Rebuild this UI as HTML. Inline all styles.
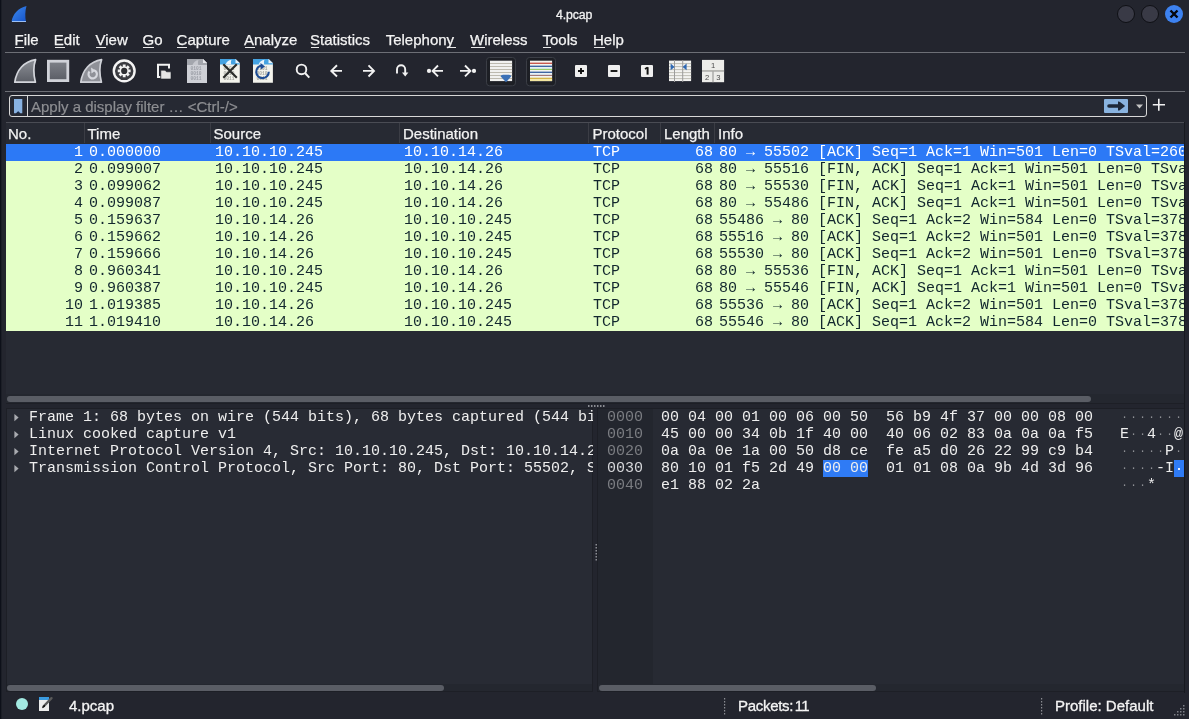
<!DOCTYPE html>
<html><head><meta charset="utf-8"><style>
*{margin:0;padding:0;box-sizing:border-box}
html,body{width:1189px;height:719px;overflow:hidden;background:#23252e;font-family:"Liberation Sans",sans-serif;color:#eff0f1}
.a{position:absolute}
.t{position:absolute;white-space:pre}
.m{font-family:"Liberation Mono",monospace}
.menu{font-size:15px;line-height:20px;color:#f4f4f4;-webkit-text-stroke:0.25px #f4f4f4}
.ul{position:absolute;height:1px;background:#e8e8e8}
.hl{position:absolute;height:1px;background:#6d6f76}
.row{position:absolute;left:6px;width:1178px;height:17px;background:#e4ffc7;color:#12272e;font-family:"Liberation Mono",monospace;font-size:15px;line-height:17px;white-space:pre;overflow:hidden}
.row.sel{background:#2c79f6;color:#ffffff}
.row span{position:absolute;top:0}
.hdr{font-size:15px;line-height:18px;color:#f2f2f2;-webkit-text-stroke:0.25px #f2f2f2}
.vs{position:absolute;top:123px;width:1px;height:20px;background:#3b3d45}
.tree{font-family:"Liberation Mono",monospace;font-size:15px;line-height:17px;color:#eeeeee}
.hex{font-family:"Liberation Mono",monospace;font-size:15px;line-height:17px;color:#eeeeee}
.off{color:#7b7d82}
.dot{color:#8e9095;font-size:11px;display:inline-block;width:9px;text-align:center;vertical-align:top}
.sb{position:absolute;font-size:15px;line-height:18px;color:#f4f4f4;-webkit-text-stroke:0.3px #f4f4f4}
</style></head><body><div style="position:absolute;left:0;top:0;width:1189px;height:719px;will-change:transform">
<div class="a" style="left:0;top:0;width:1px;height:719px;background:#0d1019"></div>
<div class="a" style="left:1px;top:0;width:1px;height:719px;background:#1b1e26"></div>
<div class="t" style="left:556px;top:6.5px;font-size:12.3px;line-height:16px;letter-spacing:-0.1px;color:#f2f2f2;-webkit-text-stroke:0.3px #f2f2f2">4.pcap</div>
<svg class="a" style="left:10px;top:5px" width="18" height="18" viewBox="0 0 18 18"><defs><linearGradient id="fg" x1="0" y1="0" x2="1" y2="1"><stop offset="0" stop-color="#3f8cf0"/><stop offset="1" stop-color="#1553c8"/></linearGradient></defs><path d="M1.5 16.5 C3 9 8 3 16.5 1 C15 6 15 12 16 16.5 Z" fill="url(#fg)"/><path d="M2 16.5 L16 16.5" stroke="#9cc0f5" stroke-width="1"/></svg>
<div class="a" style="left:1117px;top:5px;width:18px;height:18px;border-radius:50%;background:#393a46;border:1px solid #0f1015"></div>
<div class="a" style="left:1141px;top:5px;width:18px;height:18px;border-radius:50%;background:#393a46;border:1px solid #0f1015"></div>
<div class="a" style="left:1165px;top:5px;width:18px;height:18px;border-radius:50%;background:#3d82f0"></div>
<svg class="a" style="left:1165px;top:5px" width="18" height="18"><path d="M5.5 5.5 L12.5 12.5 M12.5 5.5 L5.5 12.5" stroke="#05070c" stroke-width="2.4"/></svg>
<div class="t menu" style="left:14.5px;top:30px">File</div>
<div class="ul" style="left:15.0px;top:47px;width:9.0px"></div>
<div class="t menu" style="left:53.8px;top:30px">Edit</div>
<div class="ul" style="left:55.0px;top:47px;width:9.5px"></div>
<div class="t menu" style="left:95.5px;top:30px">View</div>
<div class="ul" style="left:96.0px;top:47px;width:10.0px"></div>
<div class="t menu" style="left:142.6px;top:30px">Go</div>
<div class="ul" style="left:143.0px;top:47px;width:11.0px"></div>
<div class="t menu" style="left:176.6px;top:30px">Capture</div>
<div class="ul" style="left:177.0px;top:47px;width:10.0px"></div>
<div class="t menu" style="left:244.0px;top:30px">Analyze</div>
<div class="ul" style="left:245.0px;top:47px;width:9.5px"></div>
<div class="t menu" style="left:310.0px;top:30px">Statistics</div>
<div class="ul" style="left:310.6px;top:47px;width:8.4px"></div>
<div class="t menu" style="left:385.7px;top:30px">Telephony</div>
<div class="ul" style="left:448.9px;top:47px;width:7.1px"></div>
<div class="t menu" style="left:470.0px;top:30px">Wireless</div>
<div class="ul" style="left:470.7px;top:47px;width:14.3px"></div>
<div class="t menu" style="left:542.5px;top:30px">Tools</div>
<div class="ul" style="left:543.0px;top:47px;width:8.0px"></div>
<div class="t menu" style="left:593.0px;top:30px">Help</div>
<div class="ul" style="left:594.3px;top:47px;width:10.7px"></div>
<div class="hl" style="left:5px;top:52px;width:1180px"></div>
<div class="hl" style="left:5px;top:91px;width:1180px"></div>
<svg class="a" style="left:0;top:0" width="1189" height="92" viewBox="0 0 1189 92"><defs><linearGradient id="gfin" x1="0" y1="0" x2="0" y2="1"><stop offset="0" stop-color="#8d9097"/><stop offset="1" stop-color="#5b5e66"/></linearGradient><linearGradient id="gsq" x1="0" y1="0" x2="0" y2="1"><stop offset="0" stop-color="#7e8189"/><stop offset="1" stop-color="#5a5d65"/></linearGradient></defs><path d="M14.8 82.2 C16.5 70 24 61.5 35.6 59.6 C33.6 65 33.4 74 35.4 82.2 Z" fill="url(#gfin)" stroke="#d3d5db" stroke-width="1.7" stroke-linejoin="round"/><rect x="48.4" y="61.2" width="19.4" height="19.4" fill="url(#gsq)" stroke="#d0d2d9" stroke-width="2.8"/><path d="M80.8 82.2 C82.5 70 90 61.5 101.6 59.6 C99.6 65 99.4 74 101.4 82.2 Z" fill="#8f9198" stroke="#cfd1d7" stroke-width="1.7" stroke-linejoin="round"/><path d="M89.5 71.5 A4.2 4.2 0 1 0 94 70.2" fill="none" stroke="#d6d8de" stroke-width="2.2"/><path d="M91 67.5 L95.5 70.5 L91.5 73.5 Z" fill="#d6d8de"/><circle cx="124.2" cy="70.9" r="10.4" fill="#3a3b40" stroke="#f4f4f4" stroke-width="2.4"/><path d="M128.45 69.14 L128.69 69.51 L130.64 69.46 L130.64 72.34 L128.69 72.29 L128.45 72.66 L128.36 73.09 L129.77 74.44 L127.74 76.47 L126.39 75.06 L125.96 75.15 L125.59 75.39 L125.64 77.34 L122.76 77.34 L122.81 75.39 L122.44 75.15 L122.01 75.06 L120.66 76.47 L118.63 74.44 L120.04 73.09 L119.95 72.66 L119.71 72.29 L117.76 72.34 L117.76 69.46 L119.71 69.51 L119.95 69.14 L120.04 68.71 L118.63 67.36 L120.66 65.33 L122.01 66.74 L122.44 66.65 L122.81 66.41 L122.76 64.46 L125.64 64.46 L125.59 66.41 L125.96 66.65 L126.39 66.74 L127.74 65.33 L129.77 67.36 L128.36 68.71 Z" fill="#f2f2f2"/><circle cx="124.2" cy="70.9" r="3.1" fill="#2e2f33"/><path d="M169 68.5 V64.8 H158 V77 H160.5" fill="none" stroke="#f2f2f2" stroke-width="2"/><path d="M160.8 70.2 H165 L166.5 71.8 H171 V79 H160.8 Z" fill="#e6e6e6" stroke="#1d1f26" stroke-width="0.6"/><path d="M187 59 H203 L207 63 V83 H187 Z" fill="#ced0d6"/><path d="M187 59 H203 L207 63 V65 H187 Z" fill="#a3a6ad"/><path d="M203 59 L207 63 H203 Z" fill="#e5e6ea"/><path d="M192.5 65 C193.5 62.3 195.5 60.5 198.5 60 C197.8 61.5 197.8 63.3 198.3 65 Z" fill="#c6c8ce"/><g fill="#9b9ea6" font-family="Liberation Mono" font-size="4.6" font-weight="bold"><text x="190.5" y="70">0101</text><text x="190.5" y="75">0010</text><text x="190.5" y="80">0011</text></g><path d="M220 59 H235.5 L239.8 63.3 V82.7 H220 Z" fill="#f3f3ec"/><path d="M220 59 H235.5 L239.8 63.3 V64.5 H220 Z" fill="#45a3e2"/><path d="M235.5 59 L239.8 63.3 H235.5 Z" fill="#e8f2f8"/><path d="M225.5 64.5 C226.5 62 228.5 60.3 231.5 59.8 C230.8 61.3 230.8 63 231.3 64.5 Z" fill="#e9f4fb"/><g fill="#a5a7a0" font-family="Liberation Mono" font-size="4.6" font-weight="bold"><text x="223.5" y="70">0101</text><text x="223.5" y="75">0010</text><text x="223.5" y="80">0011</text></g><path d="M223.3 64.3 L236.8 77.8 M236.8 64.3 L223.3 77.8" stroke="#2a2c2a" stroke-width="2.1"/><path d="M253 59 H268.5 L272.9 63.3 V82.7 H253 Z" fill="#f3f3ec"/><path d="M253 59 H268.5 L272.9 63.3 V64.5 H253 Z" fill="#45a3e2"/><path d="M268.5 59 L272.9 63.3 H268.5 Z" fill="#e8f2f8"/><path d="M258.5 64.5 C259.5 62 261.5 60.3 264.5 59.8 C263.8 61.3 263.8 63 264.3 64.5 Z" fill="#e9f4fb"/><g fill="#a5a7a0" font-family="Liberation Mono" font-size="4.6" font-weight="bold"><text x="256.5" y="70">0101</text><text x="256.5" y="75">0010</text><text x="256.5" y="80">0011</text></g><path d="M262 65.5 A6.3 6.3 0 1 0 268.8 71.8" fill="none" stroke="#1d4c94" stroke-width="2.1"/><path d="M260.5 63 L265 66.5 L260.8 69.5 Z" fill="#1d4c94"/><circle cx="301.5" cy="69.4" r="4.8" fill="none" stroke="#f2f2f2" stroke-width="1.9"/><path d="M305 73 L309.3 77.6" stroke="#f2f2f2" stroke-width="2"/><path d="M342 70.9 H331 M337 65.3 L331.3 70.9 L337 76.5" fill="none" stroke="#f2f2f2" stroke-width="1.9"/><path d="M363 70.9 H374 M368.5 65.3 L374 70.9 L368.5 76.5" fill="none" stroke="#f2f2f2" stroke-width="1.9"/><path d="M397 73.6 V69.4 A4.1 4.1 0 0 1 405.2 69.4 V73" fill="none" stroke="#f2f2f2" stroke-width="1.9"/><path d="M402 72.5 H408.4 L405.2 76.6 Z" fill="#f2f2f2"/><circle cx="429" cy="70.9" r="2.1" fill="#f2f2f2"/><path d="M443 70.9 H433 M438 65.5 L432.6 70.9 L438 76.3" fill="none" stroke="#f2f2f2" stroke-width="1.9"/><circle cx="474" cy="70.9" r="2.1" fill="#f2f2f2"/><path d="M460 70.9 H470 M465 65.5 L470.4 70.9 L465 76.3" fill="none" stroke="#f2f2f2" stroke-width="1.9"/><rect x="486.5" y="57.5" width="29" height="28.3" rx="3" fill="#1d1f25" stroke="#3b3e46" stroke-width="1"/><rect x="490" y="60.7" width="22.1" height="20.4" fill="#f1f1ef"/><rect x="490" y="63.0" width="22.1" height="0.9" fill="#b7b4a8"/><rect x="490" y="66.0" width="22.1" height="0.9" fill="#b7b4a8"/><rect x="490" y="69.0" width="22.1" height="0.9" fill="#b7b4a8"/><rect x="490" y="72.0" width="22.1" height="0.9" fill="#b7b4a8"/><rect x="490" y="75.0" width="22.1" height="0.9" fill="#b7b4a8"/><rect x="490" y="78.0" width="22.1" height="0.9" fill="#b7b4a8"/><path d="M500.5 76.3 Q501 74.8 503 74.8 H509 Q511 74.8 511.3 76.3 L506 82.2 Z" fill="#3a70b6"/><rect x="526.5" y="57.5" width="29" height="28.3" rx="3" fill="#1d1f25" stroke="#3b3e46" stroke-width="1"/><rect x="530" y="60.7" width="22.1" height="20.4" fill="#f4f4f0"/><rect x="530" y="62.6" width="22.1" height="1.4" fill="#c8594f"/><rect x="530" y="65.6" width="22.1" height="1.4" fill="#3f66a3"/><rect x="530" y="68.5" width="22.1" height="1.4" fill="#8fc85a"/><rect x="530" y="71.6" width="22.1" height="1.4" fill="#3f66a3"/><rect x="530" y="74.5" width="22.1" height="1.4" fill="#9a6b6b"/><rect x="530" y="77.7" width="22.1" height="1.4" fill="#d4b447"/><rect x="530" y="67.5" width="22.1" height="1.2" fill="#d8ecf8"/><rect x="530" y="73.5" width="22.1" height="1.2" fill="#dff0fa"/><rect x="530" y="79.2" width="22.1" height="1.9" fill="#f3e6a0"/><rect x="575" y="65" width="12" height="12" rx="1" fill="#efefef"/><rect x="608" y="65" width="12" height="12" rx="1" fill="#efefef"/><rect x="641" y="65" width="12" height="12" rx="1" fill="#efefef"/><path d="M578 71 H584 M581 68 V74" stroke="#111" stroke-width="1.9"/><path d="M610.6 71 H617.4" stroke="#111" stroke-width="1.9"/><path d="M647.6 67.2 V74.6" fill="none" stroke="#111" stroke-width="2"/><path d="M645 69 L647.6 67.3" fill="none" stroke="#111" stroke-width="1.5"/><rect x="669" y="60.6" width="22.1" height="20.5" fill="#f3f3f1"/><rect x="669" y="63.2" width="22.1" height="0.9" fill="#b9b7ad"/><rect x="669" y="66.2" width="22.1" height="0.9" fill="#b9b7ad"/><rect x="669" y="69.2" width="22.1" height="0.9" fill="#b9b7ad"/><rect x="669" y="72.2" width="22.1" height="0.9" fill="#b9b7ad"/><rect x="669" y="75.2" width="22.1" height="0.9" fill="#b9b7ad"/><rect x="669" y="78.2" width="22.1" height="0.9" fill="#b9b7ad"/><rect x="674" y="60" width="1" height="22" fill="#9c9c9c"/><rect x="682.2" y="60" width="1" height="22" fill="#9c9c9c"/><path d="M670.6 63.6 L674.6 66.9 L670.6 70.2 Z" fill="#2f68b2"/><path d="M686.6 63.6 L682.6 66.9 L686.6 70.2 Z" fill="#2f68b2"/><rect x="702" y="59.9" width="22.1" height="22.3" fill="#ecece9"/><rect x="702" y="70.2" width="22.1" height="1.5" fill="#a8a8a5"/><rect x="712.3" y="71" width="1.4" height="11.2" fill="#a8a8a5"/><g fill="#4a4a4a" font-family="Liberation Sans" font-size="7.6"><text x="711" y="67.8">1</text><text x="705" y="79.6">2</text><text x="716.2" y="79.6">3</text></g></svg>
<div class="a" style="left:9px;top:95px;width:1138px;height:22px;border:1px solid #d8d8d8;border-radius:3px;background:#262933"></div>
<div class="a" style="left:27px;top:96px;width:1px;height:20px;background:#d8d8d8"></div>
<svg class="a" style="left:13.8px;top:98.8px" width="9" height="15"><path d="M0 0 H8.3 V14.2 H6.3 L4.15 12.2 L2 14.2 H0 Z" fill="#88b2e2"/><path d="M2.6 14.2 L4.15 12.6 L5.7 14.2 Z" fill="#16325a"/></svg>
<div class="t" style="left:31px;top:97px;font-size:15px;line-height:20px;color:#8d8e92;-webkit-text-stroke:0.2px #8d8e92">Apply a display filter … &lt;Ctrl-/&gt;</div>
<div class="a" style="left:1104px;top:99px;width:24px;height:14px;background:#89b3e0;border-radius:1px"></div>
<svg class="a" style="left:1104px;top:99px" width="24" height="14"><path d="M5 7 H15" stroke="#1e2838" stroke-width="3.6" stroke-linecap="round"/><path d="M14 2.6 Q15 2.2 16 3 L20.6 6.4 Q21.2 7 20.6 7.6 L16 11 Q15 11.8 14 11.4 Z" fill="#1e2838"/></svg>
<svg class="a" style="left:1135.5px;top:104px" width="8" height="6"><path d="M0 0.5 H7 L3.5 4.5 Z" fill="#c4c4c4"/></svg>
<svg class="a" style="left:1152px;top:98px" width="14" height="14"><path d="M6.8 0.8 V12.8 M0.8 6.8 H13" stroke="#f0f0f0" stroke-width="1.6"/></svg>
<div class="a" style="left:6px;top:122px;width:1178px;height:272px;background:#272a33"></div>
<div class="a" style="left:6px;top:122px;width:1178px;height:1px;background:#4a4c54"></div>
<div class="a" style="left:6px;top:123px;width:1178px;height:20px;background:#272a33"></div>
<div class="t hdr" style="left:8.0px;top:124.7px">No.</div>
<div class="t hdr" style="left:87.5px;top:124.7px">Time</div>
<div class="t hdr" style="left:213.5px;top:124.7px">Source</div>
<div class="t hdr" style="left:403.0px;top:124.7px">Destination</div>
<div class="t hdr" style="left:592.5px;top:124.7px">Protocol</div>
<div class="t hdr" style="left:664.0px;top:124.7px">Length</div>
<div class="t hdr" style="left:718.0px;top:124.7px">Info</div>
<div class="vs" style="left:84px"></div>
<div class="vs" style="left:210px"></div>
<div class="vs" style="left:399px"></div>
<div class="vs" style="left:588px"></div>
<div class="vs" style="left:660px"></div>
<div class="vs" style="left:714px"></div>
<div class="row sel" style="top:144px"><span style="right:1101px">1</span><span style="left:83px">0.000000</span><span style="left:209px">10.10.10.245</span><span style="left:398px">10.10.14.26</span><span style="left:587px">TCP</span><span style="right:471px">68</span><span style="left:713px">80 → 55502 [ACK] Seq=1 Ack=1 Win=501 Len=0 TSval=2600</span></div>
<div class="row" style="top:161px"><span style="right:1101px">2</span><span style="left:83px">0.099007</span><span style="left:209px">10.10.10.245</span><span style="left:398px">10.10.14.26</span><span style="left:587px">TCP</span><span style="right:471px">68</span><span style="left:713px">80 → 55516 [FIN, ACK] Seq=1 Ack=1 Win=501 Len=0 TSval=2600</span></div>
<div class="row" style="top:178px"><span style="right:1101px">3</span><span style="left:83px">0.099062</span><span style="left:209px">10.10.10.245</span><span style="left:398px">10.10.14.26</span><span style="left:587px">TCP</span><span style="right:471px">68</span><span style="left:713px">80 → 55530 [FIN, ACK] Seq=1 Ack=1 Win=501 Len=0 TSval=2600</span></div>
<div class="row" style="top:195px"><span style="right:1101px">4</span><span style="left:83px">0.099087</span><span style="left:209px">10.10.10.245</span><span style="left:398px">10.10.14.26</span><span style="left:587px">TCP</span><span style="right:471px">68</span><span style="left:713px">80 → 55486 [FIN, ACK] Seq=1 Ack=1 Win=501 Len=0 TSval=2600</span></div>
<div class="row" style="top:212px"><span style="right:1101px">5</span><span style="left:83px">0.159637</span><span style="left:209px">10.10.14.26</span><span style="left:398px">10.10.10.245</span><span style="left:587px">TCP</span><span style="right:471px">68</span><span style="left:713px">55486 → 80 [ACK] Seq=1 Ack=2 Win=584 Len=0 TSval=3780</span></div>
<div class="row" style="top:229px"><span style="right:1101px">6</span><span style="left:83px">0.159662</span><span style="left:209px">10.10.14.26</span><span style="left:398px">10.10.10.245</span><span style="left:587px">TCP</span><span style="right:471px">68</span><span style="left:713px">55516 → 80 [ACK] Seq=1 Ack=2 Win=501 Len=0 TSval=3780</span></div>
<div class="row" style="top:246px"><span style="right:1101px">7</span><span style="left:83px">0.159666</span><span style="left:209px">10.10.14.26</span><span style="left:398px">10.10.10.245</span><span style="left:587px">TCP</span><span style="right:471px">68</span><span style="left:713px">55530 → 80 [ACK] Seq=1 Ack=2 Win=501 Len=0 TSval=3780</span></div>
<div class="row" style="top:263px"><span style="right:1101px">8</span><span style="left:83px">0.960341</span><span style="left:209px">10.10.10.245</span><span style="left:398px">10.10.14.26</span><span style="left:587px">TCP</span><span style="right:471px">68</span><span style="left:713px">80 → 55536 [FIN, ACK] Seq=1 Ack=1 Win=501 Len=0 TSval=2600</span></div>
<div class="row" style="top:280px"><span style="right:1101px">9</span><span style="left:83px">0.960387</span><span style="left:209px">10.10.10.245</span><span style="left:398px">10.10.14.26</span><span style="left:587px">TCP</span><span style="right:471px">68</span><span style="left:713px">80 → 55546 [FIN, ACK] Seq=1 Ack=1 Win=501 Len=0 TSval=2600</span></div>
<div class="row" style="top:297px"><span style="right:1101px">10</span><span style="left:83px">1.019385</span><span style="left:209px">10.10.14.26</span><span style="left:398px">10.10.10.245</span><span style="left:587px">TCP</span><span style="right:471px">68</span><span style="left:713px">55536 → 80 [ACK] Seq=1 Ack=2 Win=501 Len=0 TSval=3780</span></div>
<div class="row" style="top:314px"><span style="right:1101px">11</span><span style="left:83px">1.019410</span><span style="left:209px">10.10.14.26</span><span style="left:398px">10.10.10.245</span><span style="left:587px">TCP</span><span style="right:471px">68</span><span style="left:713px">55546 → 80 [ACK] Seq=1 Ack=2 Win=584 Len=0 TSval=3780</span></div>
<div class="a" style="left:6px;top:394px;width:1178px;height:9px;background:#24272f"></div>
<div class="a" style="left:6px;top:403px;width:1178px;height:1px;background:#1d1f26"></div>
<div class="a" style="left:7px;top:396px;width:1084px;height:6px;border-radius:3px;background:#5a5d65"></div>
<svg class="a" style="left:587px;top:405px" width="18" height="3"><rect x="1" y="0" width="1.5" height="2" fill="#8a8c92"/><rect x="4" y="0" width="1.5" height="2" fill="#8a8c92"/><rect x="7" y="0" width="1.5" height="2" fill="#8a8c92"/><rect x="10" y="0" width="1.5" height="2" fill="#8a8c92"/><rect x="13" y="0" width="1.5" height="2" fill="#8a8c92"/><rect x="16" y="0" width="1.5" height="2" fill="#8a8c92"/></svg>
<div class="a" style="left:6px;top:408px;width:587px;height:284px;background:#1d1f26"></div>
<div class="a" style="left:7px;top:409px;width:585px;height:282px;background:#282b34"></div>
<div class="a" style="left:7px;top:684px;width:585px;height:7px;background:#24272f"></div>
<div class="a" style="left:6px;top:408px;width:587px;height:260px;overflow:hidden">
<svg class="a" style="left:7.5px;top:6px" width="6" height="9"><path d="M0.4 0 L4.6 3.6 L0.4 7.2 Z" fill="#a9abb0"/></svg>
<div class="t tree" style="left:23px;top:1px">Frame 1: 68 bytes on wire (544 bits), 68 bytes captured (544 bits)</div>
<svg class="a" style="left:7.5px;top:23px" width="6" height="9"><path d="M0.4 0 L4.6 3.6 L0.4 7.2 Z" fill="#a9abb0"/></svg>
<div class="t tree" style="left:23px;top:18px">Linux cooked capture v1</div>
<svg class="a" style="left:7.5px;top:40px" width="6" height="9"><path d="M0.4 0 L4.6 3.6 L0.4 7.2 Z" fill="#a9abb0"/></svg>
<div class="t tree" style="left:23px;top:35px">Internet Protocol Version 4, Src: 10.10.10.245, Dst: 10.10.14.26</div>
<svg class="a" style="left:7.5px;top:57px" width="6" height="9"><path d="M0.4 0 L4.6 3.6 L0.4 7.2 Z" fill="#a9abb0"/></svg>
<div class="t tree" style="left:23px;top:52px">Transmission Control Protocol, Src Port: 80, Dst Port: 55502, Seq: 1, Ack: 1, Len: 0</div>
</div>
<svg class="a" style="left:595px;top:543px" width="3" height="19"><rect x="0.5" y="1" width="1.5" height="1.5" fill="#8a8c92"/><rect x="0.5" y="4" width="1.5" height="1.5" fill="#8a8c92"/><rect x="0.5" y="7" width="1.5" height="1.5" fill="#8a8c92"/><rect x="0.5" y="10" width="1.5" height="1.5" fill="#8a8c92"/><rect x="0.5" y="13" width="1.5" height="1.5" fill="#8a8c92"/><rect x="0.5" y="16" width="1.5" height="1.5" fill="#8a8c92"/></svg>
<div class="a" style="left:597px;top:408px;width:588px;height:284px;background:#1d1f26"></div>
<div class="a" style="left:598px;top:409px;width:586px;height:282px;background:#272a33"></div>
<div class="a" style="left:598px;top:409px;width:55px;height:275px;background:#23262e"></div>
<div class="a" style="left:598px;top:684px;width:586px;height:7px;background:#24272f"></div>
<div class="a" style="left:597px;top:408px;width:587px;height:276px;overflow:hidden">
<div class="t hex" style="left:10px;top:1.3px;color:#7b7d82">0000</div>
<div class="t hex" style="left:64px;top:1.3px">00 04 00 01 00 06 00 50  56 b9 4f 37 00 00 08 00</div>
<div class="t hex" style="left:523px;top:1.3px"><span class="dot">·</span><span class="dot">·</span><span class="dot">·</span><span class="dot">·</span><span class="dot">·</span><span class="dot">·</span><span class="dot">·</span><span class="dot">·</span></div>
<div class="t hex" style="left:10px;top:18.3px;color:#7b7d82">0010</div>
<div class="t hex" style="left:64px;top:18.3px">45 00 00 34 0b 1f 40 00  40 06 02 83 0a 0a 0a f5</div>
<div class="t hex" style="left:523px;top:18.3px">E<span class="dot">·</span><span class="dot">·</span>4<span class="dot">·</span><span class="dot">·</span>@<span class="dot">·</span></div>
<div class="t hex" style="left:10px;top:35.3px;color:#7b7d82">0020</div>
<div class="t hex" style="left:64px;top:35.3px">0a 0a 0e 1a 00 50 d8 ce  fe a5 d0 26 22 99 c9 b4</div>
<div class="t hex" style="left:523px;top:35.3px"><span class="dot">·</span><span class="dot">·</span><span class="dot">·</span><span class="dot">·</span><span class="dot">·</span>P<span class="dot">·</span><span class="dot">·</span></div>
<div class="t hex" style="left:10px;top:52.3px;color:#d6d7da">0030</div>
<div class="t hex" style="left:64px;top:52.3px">80 10 01 f5 2d 49 00 00  01 01 08 0a 9b 4d 3d 96</div>
<div class="t hex" style="left:523px;top:52.3px"><span class="dot">·</span><span class="dot">·</span><span class="dot">·</span><span class="dot">·</span>-I<span class="dot">·</span><span class="dot">·</span></div>
<div class="t hex" style="left:10px;top:69.3px;color:#7b7d82">0040</div>
<div class="t hex" style="left:64px;top:69.3px">e1 88 02 2a</div>
<div class="t hex" style="left:523px;top:69.3px"><span class="dot">·</span><span class="dot">·</span><span class="dot">·</span>*</div>
</div>
<div class="a" style="left:823px;top:460px;width:45px;height:17px;background:#2f7bf5"></div>
<div class="t hex" style="left:823px;top:460.3px">00 00</div>
<div class="a" style="left:1174px;top:460px;width:10px;height:17px;background:#2f7bf5"></div>
<div class="a" style="left:1178px;top:468px;width:2px;height:2px;background:#e8eefc"></div>
<div class="a" style="left:7px;top:685px;width:437px;height:6px;border-radius:3px;background:#5a5d65"></div>
<div class="a" style="left:599px;top:685px;width:277px;height:6px;border-radius:3px;background:#5a5d65"></div>
<div class="a" style="left:1184px;top:122px;width:1px;height:571px;background:#17191f"></div>
<div class="a" style="left:15.6px;top:697.6px;width:12.8px;height:12.8px;border-radius:50%;background:#a3eae2"></div>
<svg class="a" style="left:38px;top:696px" width="16" height="16"><rect x="1" y="1" width="10" height="14" fill="#ececec"/><rect x="1" y="1" width="10" height="3" fill="#3a9be0"/><path d="M5.5 10.5 L13.5 2.2" stroke="#5a5a5a" stroke-width="2.4" stroke-linecap="round"/><path d="M4.6 11.6 L6.2 9.2 L7 10 Z" fill="#111" stroke="#111" stroke-width="1"/></svg>
<div class="t sb" style="left:69px;top:697px">4.pcap</div>
<div class="t sb" style="left:738px;top:697px"><span style="letter-spacing:-0.3px">Packets:</span><span style="margin-left:1.6px;letter-spacing:-0.6px">11</span></div>
<div class="t sb" style="left:1055px;top:697px">Profile: Default</div>
<svg class="a" style="left:724px;top:698px" width="2" height="17"><rect x="0" y="0" width="1.2" height="1.5" fill="#8a8c92"/><rect x="0" y="3" width="1.2" height="1.5" fill="#8a8c92"/><rect x="0" y="6" width="1.2" height="1.5" fill="#8a8c92"/><rect x="0" y="9" width="1.2" height="1.5" fill="#8a8c92"/><rect x="0" y="12" width="1.2" height="1.5" fill="#8a8c92"/><rect x="0" y="15" width="1.2" height="1.5" fill="#8a8c92"/></svg>
<svg class="a" style="left:1041px;top:698px" width="2" height="17"><rect x="0" y="0" width="1.2" height="1.5" fill="#8a8c92"/><rect x="0" y="3" width="1.2" height="1.5" fill="#8a8c92"/><rect x="0" y="6" width="1.2" height="1.5" fill="#8a8c92"/><rect x="0" y="9" width="1.2" height="1.5" fill="#8a8c92"/><rect x="0" y="12" width="1.2" height="1.5" fill="#8a8c92"/><rect x="0" y="15" width="1.2" height="1.5" fill="#8a8c92"/></svg>
<svg class="a" style="left:1172px;top:703px" width="13" height="13"><rect x="11" y="11" width="1.5" height="1.5" fill="#7d7f85"/><rect x="8" y="11" width="1.5" height="1.5" fill="#7d7f85"/><rect x="5" y="11" width="1.5" height="1.5" fill="#7d7f85"/><rect x="2" y="11" width="1.5" height="1.5" fill="#7d7f85"/><rect x="11" y="8" width="1.5" height="1.5" fill="#7d7f85"/><rect x="8" y="8" width="1.5" height="1.5" fill="#7d7f85"/><rect x="5" y="8" width="1.5" height="1.5" fill="#7d7f85"/><rect x="11" y="5" width="1.5" height="1.5" fill="#7d7f85"/><rect x="8" y="5" width="1.5" height="1.5" fill="#7d7f85"/><rect x="11" y="2" width="1.5" height="1.5" fill="#7d7f85"/></svg>
</div></body></html>
